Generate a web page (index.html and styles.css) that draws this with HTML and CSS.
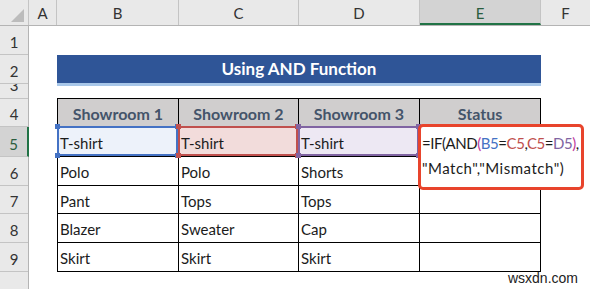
FILE: index.html
```html
<!DOCTYPE html>
<html lang="en">
<head>
  <meta charset="UTF-8" />
  <title>Using AND Function</title>
  <link rel="stylesheet" href="styles.css">
</head>
<body>
  <div class="sheet">
    <div class="col-heads">
      <div class="corner"><span class="corner-mark"></span></div>
      <div class="col-head col-a">A</div>
      <div class="col-head col-b">B</div>
      <div class="col-head col-c">C</div>
      <div class="col-head col-d">D</div>
      <div class="col-head col-e active">E</div>
      <div class="col-head col-f">F</div>
    </div>

    <div class="sheet-body">
      <div class="row-heads">
        <div class="row-head h29">1</div>
        <div class="row-head h29">2</div>
        <div class="row-head h15">3</div>
        <div class="row-head h28">4</div>
        <div class="row-head h30 active">5</div>
        <div class="row-head h29">6</div>
        <div class="row-head h28">7</div>
        <div class="row-head h29">8</div>
        <div class="row-head h29">9</div>
        <div class="row-head rest"></div>
      </div>

      <div class="cells">
        <div class="title-bar">Using AND Function</div>

        <div class="data">
          <div class="cell head">Showroom 1</div>
          <div class="cell head">Showroom 2</div>
          <div class="cell head">Showroom 3</div>
          <div class="cell head">Status</div>

          <div class="cell ref ref-blue">T-shirt</div>
          <div class="cell ref ref-red">T-shirt</div>
          <div class="cell ref ref-purple">T-shirt</div>
          <div class="cell"></div>

          <div class="cell">Polo</div>
          <div class="cell">Polo</div>
          <div class="cell">Shorts</div>
          <div class="cell"></div>

          <div class="cell">Pant</div>
          <div class="cell">Tops</div>
          <div class="cell">Tops</div>
          <div class="cell"></div>

          <div class="cell">Blazer</div>
          <div class="cell">Sweater</div>
          <div class="cell">Cap</div>
          <div class="cell"></div>

          <div class="cell">Skirt</div>
          <div class="cell">Skirt</div>
          <div class="cell">Skirt</div>
          <div class="cell"></div>
        </div>
      </div>
    </div>

    <!-- formula being edited in E5, wraps over E6 -->
    <div class="formula-edit">
      <div class="formula-line first">=IF(AND<span class="paren">(</span><span class="f-blue">B5</span>=<span class="f-red">C5</span>,<span class="f-red">C5</span>=<span class="f-purple">D5</span><span class="paren">)</span>,</div>
      <div class="formula-line second">"Match","Mismatch")</div>
    </div>

    <div class="watermark">wsxdn.com</div>
  </div>
</body>
</html>
```

FILE: styles.css
```css
* { box-sizing: border-box; margin: 0; padding: 0; }
body { background: #fff; font-family: Lato, "Open Sans", sans-serif; color: #1b1b1b; }

.sheet {
  position: relative;
  width: 590px;
  height: 289px;
  overflow: hidden;
  background: #fff;
}

/* column letters */
.col-heads {
  display: flex;
  height: 26px;
  background: #e9e9e9;
  border-bottom: 1px solid #b4b4b4;
}
.corner {
  width: 29px;
  border-right: 1px solid #c4c4c4;
  position: relative;
}
.corner-mark {
  position: absolute;
  right: 4px;
  bottom: 3px;
  width: 0;
  height: 0;
  border-left: 13px solid transparent;
  border-bottom: 13px solid #bcbcbc;
}
.col-head {
  display: flex;
  align-items: flex-end;
  justify-content: center;
  padding-bottom: 3px;
  font-size: 15px;
  color: #333;
  border-right: 1px solid #c4c4c4;
}
.col-a { width: 28px; }
.col-b { width: 122px; }
.col-c { width: 120px; }
.col-d { width: 121px; }
.col-e { width: 121px; }
.col-f { flex: 1; border-right: none; }
.col-head.active {
  background: #d3d3d3;
  color: #2a5d3e;
  border-bottom: 2px solid #217346;
  padding-bottom: 1px;
}

.sheet-body { display: flex; }

/* row numbers */
.row-heads {
  width: 29px;
  display: flex;
  flex-direction: column;
  background: #e9e9e9;
  border-right: 1px solid #b4b4b4;
  height: 263px;
}
.row-head {
  display: flex;
  align-items: flex-end;
  justify-content: center;
  overflow: hidden;
  font-size: 15px;
  line-height: 16px;
  padding-bottom: 4px;
  color: #333;
  border-bottom: 1px solid #c4c4c4;
}
.row-head.h15 { height: 15px; padding-bottom: 5px; }
.row-head.h28 { height: 28px; }
.row-head.h29 { height: 29px; }
.row-head.h30 { height: 30px; }
.row-head.rest { flex: 1; border-bottom: none; }
.row-head.active {
  background: #d3d3d3;
  color: #2a5d3e;
  border-right: 2px solid #217346;
  margin-right: -1px;
}

.cells { padding-left: 28px; }

.title-bar {
  width: 484px;
  height: 31px;
  margin-top: 29px;
  background: #2f5597;
  border-bottom: 3px solid #a8c7e9;
  color: #fff;
  font-weight: bold;
  font-size: 17px;
  text-align: center;
  line-height: 28px;
}

.data {
  margin-top: 12px;
  display: grid;
  grid-template-columns: 122px 120px 121px 121px;
  grid-template-rows: 28px 30px 29px 28px 29px 29px;
  border-top: 1px solid #000;
}
.cell {
  border-right: 1px solid #000;
  border-bottom: 1px solid #000;
  font-size: 15px;
  padding: 2px 2px 0;
  display: flex;
  align-items: center;
}
.cell:nth-child(4n+1) { border-left: 1px solid #000; }
.cell.head {
  background: #d0cece;
  color: #44546a;
  font-weight: bold;
  font-size: 16px;
  justify-content: center;
}

/* range references of the formula */
.cell.ref { position: relative; }
.cell.ref::before {
  content: "";
  position: absolute;
  top: -1px;
  left: -1px;
  right: 0;
  bottom: 0;
  border: 2px solid var(--ref);
}
.cell.ref::after {
  content: "";
  position: absolute;
  top: -3px;
  left: -3px;
  right: -2px;
  bottom: -2px;
  background:
    linear-gradient(var(--ref), var(--ref)) left top / 5px 5px no-repeat,
    linear-gradient(var(--ref), var(--ref)) right top / 5px 5px no-repeat,
    linear-gradient(var(--ref), var(--ref)) left bottom / 5px 5px no-repeat,
    linear-gradient(var(--ref), var(--ref)) right bottom / 5px 5px no-repeat;
}
.ref-blue { --ref: #4472c4; background: #edf2fa; }
.ref-red { --ref: #c0504d; background: #f2dcdb; }
.ref-purple { --ref: #8064a2; background: #ede8f3; }

.formula-edit {
  position: absolute;
  left: 418px;
  top: 124px;
  width: 166px;
  height: 66px;
  background: #fff;
  border: 3px solid #e8442c;
  border-radius: 5px;
  padding: 4px 0 0 1px;
  font-size: 15px;
  line-height: 25px;
  color: #1b1b1b;
  white-space: nowrap;
}
.formula-line.first { letter-spacing: -0.45px; }
.formula-line.second { letter-spacing: 0.5px; }
.f-blue { color: #4472c4; }
.f-red { color: #c0504d; }
.f-purple { color: #8064a2; }
.paren { color: #c0399b; }

.watermark {
  position: absolute;
  right: 12px;
  bottom: 3px;
  font-family: "Liberation Sans", Arial, sans-serif;
  font-size: 14px;
  color: #222;
}
```
